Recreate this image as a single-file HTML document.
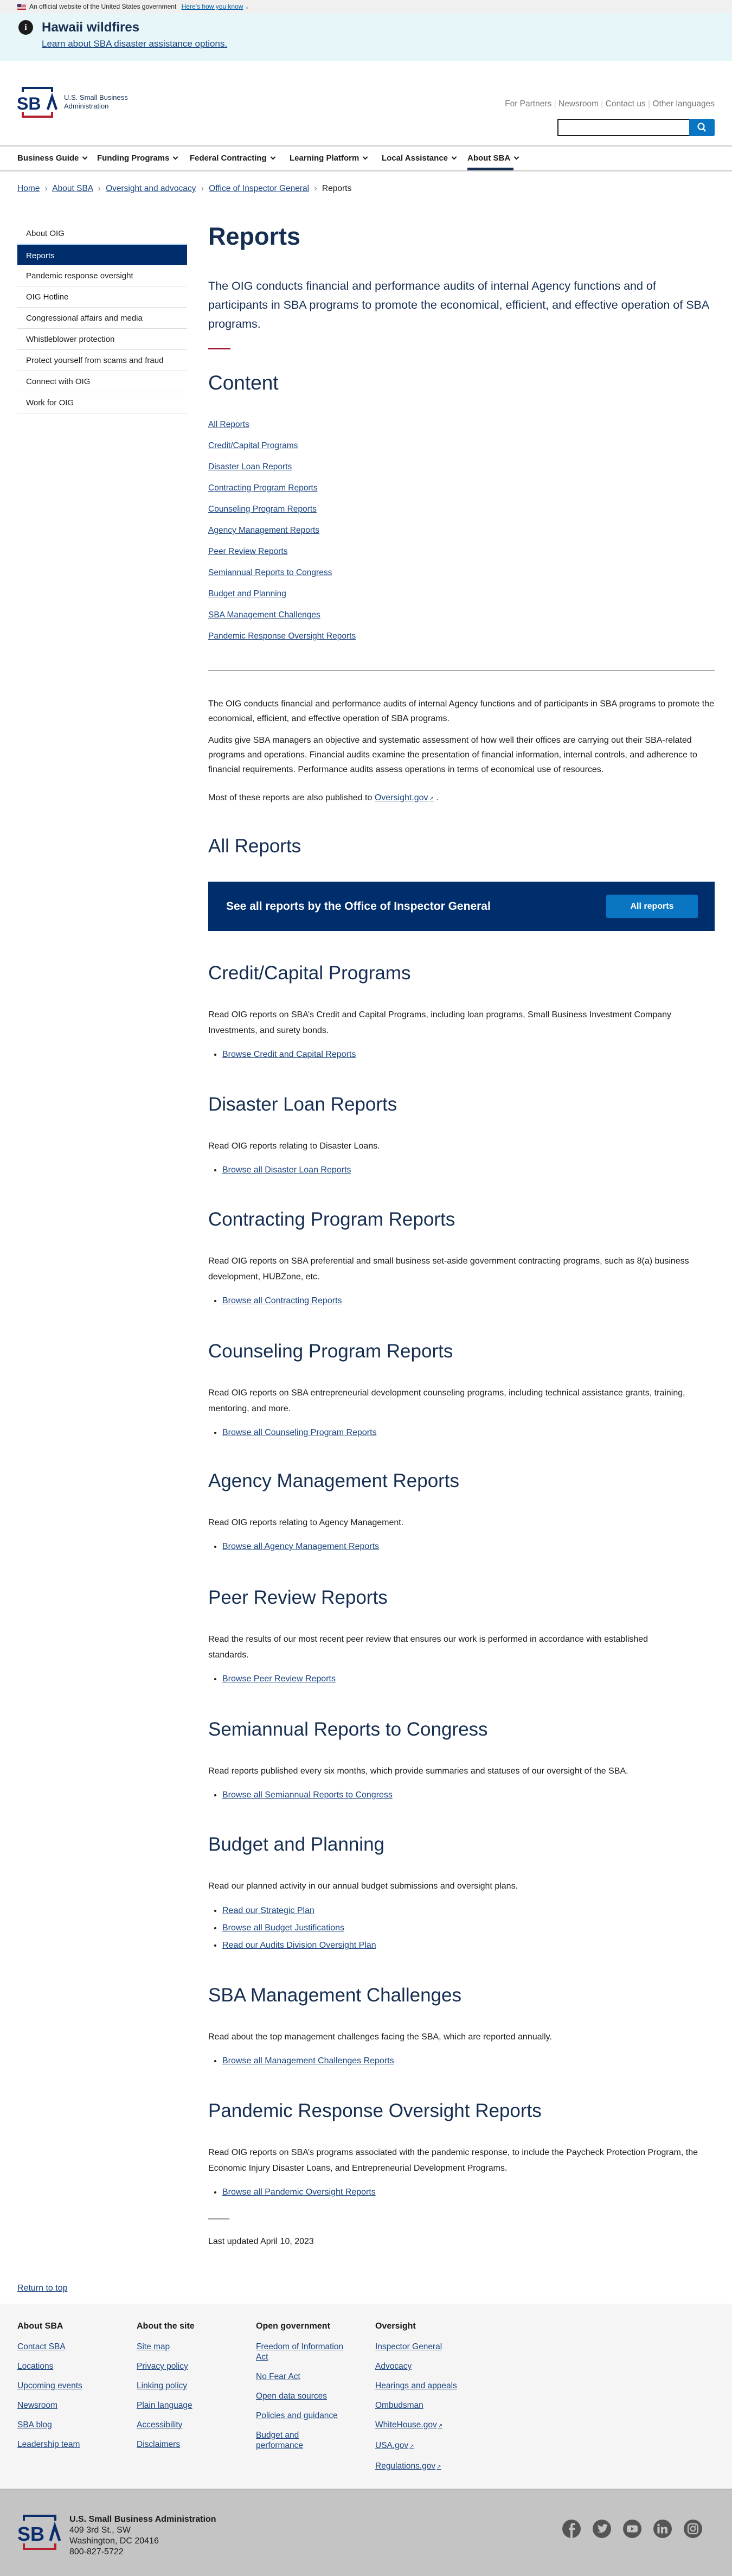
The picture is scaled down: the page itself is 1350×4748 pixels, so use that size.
<!DOCTYPE html>
<html><head><meta charset="utf-8"><title>Reports | U.S. Small Business Administration</title>
<style>
*{margin:0;padding:0;box-sizing:border-box}
html,body{width:1350px;height:4748px;background:#fff;font-family:"Liberation Sans",Arial,sans-serif;color:#1b1b1b;position:relative;overflow:hidden}
a{color:#1a4480;text-decoration:underline}
.abs{position:absolute}
.gov{left:0;top:0;width:1350px;height:24px;background:#f0f0f0;font-size:12px;line-height:24px;padding-left:54px}
.gov a{color:#005ea2;margin-left:6px}
.hawaii{left:0;top:24px;width:1350px;height:88px;background:#e7f6f8}
.nav{left:0;top:268px;width:1350px;height:48px;border-top:2px solid #c9c9c9;border-bottom:2px solid #c9c9c9}
.nav span{position:absolute;top:0;line-height:44px;font-size:15px;font-weight:bold;color:#1b1b1b;white-space:nowrap}
.nav span:after{content:"";display:inline-block;width:5px;height:5px;border-right:2px solid #1b1b1b;border-bottom:2px solid #1b1b1b;transform:rotate(45deg);margin-left:8px;position:relative;top:-3px}
.side{left:32px;top:411px;width:313px}
.side div{height:39px;line-height:39px;padding-left:16px;font-size:15px;border-bottom:1px solid #dcdee0;color:#1b1b1b;white-space:nowrap}
.side div.act{background:#002e6d;color:#fff;border-top:2px solid #a8d2f0}
.main{left:384px;width:934px}
h1{font-size:45px;font-weight:bold;color:#162e51;line-height:54px}
.intro{font-size:21.5px;line-height:35px;color:#162e51}
h2{font-size:35px;font-weight:normal;color:#162e51;line-height:44px;white-space:nowrap}
.toc a{display:block;font-size:15.5px;line-height:39px;height:39px}
p.b{font-size:16px;line-height:27px}
.sec p{font-size:16px;line-height:29px;margin-top:40px}
.sec ul{margin-top:15px;padding-left:26px;font-size:16px;line-height:29px}
.sec ul.m li{line-height:32px}
.foot{left:0;top:4246px;width:1350px;height:341px;background:#f5f5f5}
.fcol{position:absolute;top:30px;width:190px}
.fcol h4{font-size:16px;font-weight:bold;line-height:24px;margin-bottom:16px;color:#1b1b1b}
.fcol a{display:block;font-size:15.5px;line-height:19px;margin-bottom:17px;color:#1a4480}
.fbot{left:0;top:4587px;width:1350px;height:161px;background:#c4c4c4;border-top:3px solid #b9b9b9}
.ext:after{content:"↗";font-size:10px;margin-left:2px}
</style></head><body>

<div class="abs gov">
<svg class="abs" style="left:32px;top:7px" width="16" height="11" viewBox="0 0 16 11"><rect width="16" height="11" fill="#fff"/><g fill="#b22234"><rect y="0" width="16" height="1.2"/><rect y="2.4" width="16" height="1.2"/><rect y="4.8" width="16" height="1.2"/><rect y="7.2" width="16" height="1.2"/><rect y="9.6" width="16" height="1.4"/></g><rect width="7" height="6" fill="#3c3b6e"/></svg>
An official website of the United States government <a href="#">Here’s how you know</a> <span style="font-size:9px;color:#005ea2">⌄</span>
</div>

<div class="abs hawaii">
<div class="abs" style="left:34px;top:13px;width:27px;height:27px;border-radius:50%;background:#1b1b1b;color:#fff;font:bold 16px/27px 'Liberation Serif',serif;text-align:center">i</div>
<div class="abs" style="left:77px;top:12px;font-size:24px;font-weight:bold;color:#162e51;line-height:30px">Hawaii wildfires</div>
<a class="abs" style="left:77px;top:46px;font-size:17px;line-height:22px;color:#1a4480" href="#">Learn about SBA disaster assistance options.</a>
</div>

<svg class="abs" style="left:30px;top:158px" width="80" height="62" viewBox="0 0 80 62">
<path d="M12 12 V4 H66 V12" fill="none" stroke="#0b2d6b" stroke-width="4"/>
<path d="M12 48 V57 H66 V48" fill="none" stroke="#b51f2e" stroke-width="4"/>
<text x="1" y="44" font-family="Liberation Sans,sans-serif" font-weight="bold" font-size="32" fill="#0b2d6b">SB</text>
<path d="M58 44 L66 20 L74 44" fill="none" stroke="#0b2d6b" stroke-width="4.5"/>
</svg>
<div class="abs" style="left:118px;top:172px;font-size:13px;line-height:16px;color:#162e51">U.S. Small Business<br>Administration</div>

<div class="abs" style="right:32px;top:182px;font-size:15.5px;line-height:20px;color:#71767a;white-space:nowrap">For Partners <span style="color:#ccc">|</span> Newsroom <span style="color:#ccc">|</span> Contact us <span style="color:#ccc">|</span> Other languages</div>
<div class="abs" style="left:1028px;top:219px;width:244px;height:32px;border:2px solid #1b1b1b;border-right:none"></div>
<div class="abs" style="left:1271px;top:219px;width:47px;height:32px;background:#0a75c2;border-radius:0 3px 3px 0">
<svg width="47" height="32" viewBox="0 0 47 32"><circle cx="22" cy="14" r="5.5" fill="none" stroke="#fff" stroke-width="2.2"/><path d="M26 18 L30 23" stroke="#fff" stroke-width="2.5"/></svg></div>

<div class="abs nav">
<span style="left:32px">Business Guide</span>
<span style="left:179px">Funding Programs</span>
<span style="left:350px">Federal Contracting</span>
<span style="left:534px">Learning Platform</span>
<span style="left:704px">Local Assistance</span>
<span style="left:862px">About SBA</span>
<div class="abs" style="left:862px;top:39px;width:85px;height:5px;background:#162e51"></div>
</div>

<div class="abs" style="left:32px;top:337px;font-size:15.5px;line-height:22px;white-space:nowrap;color:#1b1b1b">
<a href="#">Home</a> <span style="color:#71767a;margin:0 5px">›</span> <a href="#">About SBA</a> <span style="color:#71767a;margin:0 5px">›</span> <a href="#">Oversight and advocacy</a> <span style="color:#71767a;margin:0 5px">›</span> <a href="#">Office of Inspector General</a> <span style="color:#71767a;margin:0 5px">›</span> Reports</div>

<div class="abs side">
<div>About OIG</div><div class="act">Reports</div><div>Pandemic response oversight</div><div>OIG Hotline</div><div>Congressional affairs and media</div><div>Whistleblower protection</div><div>Protect yourself from scams and fraud</div><div>Connect with OIG</div><div>Work for OIG</div>
</div>

<h1 class="abs main" style="top:409px">Reports</h1>
<div class="abs main intro" style="top:510px">The OIG conducts financial and performance audits of internal Agency functions and of participants in SBA programs to promote the economical, efficient, and effective operation of SBA programs.</div>
<div class="abs" style="left:384px;top:641px;width:41px;height:3px;background:#9e1b32"></div>
<h2 class="abs main" style="top:684px;font-size:37px">Content</h2>
<div class="abs main toc" style="top:763px">
<a href="#">All Reports</a><a href="#">Credit/Capital Programs</a><a href="#">Disaster Loan Reports</a><a href="#">Contracting Program Reports</a><a href="#">Counseling Program Reports</a><a href="#">Agency Management Reports</a><a href="#">Peer Review Reports</a><a href="#">Semiannual Reports to Congress</a><a href="#">Budget and Planning</a><a href="#">SBA Management Challenges</a><a href="#">Pandemic Response Oversight Reports</a>
</div>
<div class="abs" style="left:384px;top:1235px;width:934px;height:2px;background:#a9aeb1"></div>
<p class="abs main b" style="top:1284px">The OIG conducts financial and performance audits of internal Agency functions and of participants in SBA programs to promote the economical, efficient, and effective operation of SBA programs.</p>
<p class="abs main b" style="top:1351px">Audits give SBA managers an objective and systematic assessment of how well their offices are carrying out their SBA-related programs and operations. Financial audits examine the presentation of financial information, internal controls, and adherence to financial requirements. Performance audits assess operations in terms of economical use of resources.</p>
<p class="abs main b" style="top:1457px">Most of these reports are also published to <a class="ext" href="#">Oversight.gov</a> .</p>

<h2 class="abs main" style="top:1538px">All Reports</h2>
<div class="abs" style="left:384px;top:1625px;width:934px;height:91px;background:#002e6d">
<div class="abs" style="left:33px;top:32px;font-size:21px;font-weight:bold;color:#fff;line-height:28px">See all reports by the Office of Inspector General</div>
<div class="abs" style="left:734px;top:24px;width:169px;height:43px;background:#0a75c2;border-radius:3px;color:#fff;font-size:16px;font-weight:bold;text-align:center;line-height:43px">All reports</div>
</div>

<div class="abs main sec" style="top:1772px"><h2>Credit/Capital Programs</h2><p>Read OIG reports on SBA’s Credit and Capital Programs, including loan programs, Small Business Investment Company Investments, and surety bonds.</p><ul><li><a href="#">Browse Credit and Capital Reports</a></li></ul></div>
<div class="abs main sec" style="top:2014px"><h2>Disaster Loan Reports</h2><p>Read OIG reports relating to Disaster Loans.</p><ul><li><a href="#">Browse all Disaster Loan Reports</a></li></ul></div>
<div class="abs main sec" style="top:2226px"><h2>Contracting Program Reports</h2><p>Read OIG reports on SBA preferential and small business set-aside government contracting programs, such as 8(a) business development, HUBZone, etc.</p><ul><li><a href="#">Browse all Contracting Reports</a></li></ul></div>
<div class="abs main sec" style="top:2469px"><h2>Counseling Program Reports</h2><p>Read OIG reports on SBA entrepreneurial development counseling programs, including technical assistance grants, training, mentoring, and more.</p><ul><li><a href="#">Browse all Counseling Program Reports</a></li></ul></div>
<div class="abs main sec" style="top:2708px"><h2>Agency Management Reports</h2><p>Read OIG reports relating to Agency Management.</p><ul><li><a href="#">Browse all Agency Management Reports</a></li></ul></div>
<div class="abs main sec" style="top:2923px"><h2>Peer Review Reports</h2><p style="max-width:850px">Read the results of our most recent peer review that ensures our work is performed in accordance with established standards.</p><ul><li><a href="#">Browse Peer Review Reports</a></li></ul></div>
<div class="abs main sec" style="top:3166px"><h2>Semiannual Reports to Congress</h2><p>Read reports published every six months, which provide summaries and statuses of our oversight of the SBA.</p><ul><li><a href="#">Browse all Semiannual Reports to Congress</a></li></ul></div>
<div class="abs main sec" style="top:3378px"><h2>Budget and Planning</h2><p>Read our planned activity in our annual budget submissions and oversight plans.</p><ul class="m"><li><a href="#">Read our Strategic Plan</a></li><li><a href="#">Browse all Budget Justifications</a></li><li><a href="#">Read our Audits Division Oversight Plan</a></li></ul></div>
<div class="abs main sec" style="top:3656px"><h2>SBA Management Challenges</h2><p>Read about the top management challenges facing the SBA, which are reported annually.</p><ul><li><a href="#">Browse all Management Challenges Reports</a></li></ul></div>
<div class="abs main sec" style="top:3869px"><h2>Pandemic Response Oversight Reports</h2><p>Read OIG reports on SBA’s programs associated with the pandemic response, to include the Paycheck Protection Program, the Economic Injury Disaster Loans, and Entrepreneurial Development Programs.</p><ul><li><a href="#">Browse all Pandemic Oversight Reports</a></li></ul></div>

<div class="abs" style="left:384px;top:4088px;width:39px;height:3px;background:#a9aeb1"></div>
<div class="abs" style="left:384px;top:4121px;font-size:16px;line-height:22px">Last updated April 10, 2023</div>
<a class="abs" style="left:32px;top:4207px;font-size:16px;line-height:22px" href="#">Return to top</a>

<div class="abs foot">
<div class="fcol" style="left:32px"><h4>About SBA</h4><a href="#">Contact SBA</a><a href="#">Locations</a><a href="#">Upcoming events</a><a href="#">Newsroom</a><a href="#">SBA blog</a><a href="#">Leadership team</a></div>
<div class="fcol" style="left:252px"><h4>About the site</h4><a href="#">Site map</a><a href="#">Privacy policy</a><a href="#">Linking policy</a><a href="#">Plain language</a><a href="#">Accessibility</a><a href="#">Disclaimers</a></div>
<div class="fcol" style="left:472px;width:182px"><h4>Open government</h4><a href="#">Freedom of Information Act</a><a href="#">No Fear Act</a><a href="#">Open data sources</a><a href="#">Policies and guidance</a><a href="#" style="width:110px">Budget and performance</a></div>
<div class="fcol" style="left:692px"><h4>Oversight</h4><a href="#">Inspector General</a><a href="#">Advocacy</a><a href="#">Hearings and appeals</a><a href="#">Ombudsman</a><a class="ext" href="#">WhiteHouse.gov</a><a class="ext" href="#">USA.gov</a><a class="ext" href="#">Regulations.gov</a></div>
</div>

<div class="abs fbot">
<svg class="abs" style="left:30px;top:42px" width="84" height="72" viewBox="0 0 84 72">
<path d="M14 14 V5 H72 V14" fill="none" stroke="#0b2d6b" stroke-width="4"/>
<path d="M14 56 V66 H72 V56" fill="none" stroke="#b51f2e" stroke-width="4"/>
<text x="2" y="51" font-family="Liberation Sans,sans-serif" font-weight="bold" font-size="36" fill="#0b2d6b">SB</text>
<path d="M63 51 L71 24 L80 51" fill="none" stroke="#0b2d6b" stroke-width="5"/>
</svg>
<div class="abs" style="left:128px;top:44px;font-size:16px;line-height:20px;color:#1b1b1b"><b>U.S. Small Business Administration</b><br>409 3rd St., SW<br>Washington, DC 20416<br>800-827-5722</div>
<svg class="abs" style="left:1037px;top:54px" width="260" height="36" viewBox="0 0 260 36">
<g fill="#555">
<circle cx="17" cy="17" r="17"/><circle cx="73" cy="17" r="17"/><circle cx="129" cy="17" r="17"/><circle cx="185" cy="17" r="17"/><circle cx="241" cy="17" r="17"/>
</g>
<path d="M19 34 V19 H23 V15 H19 V12 Q19 10 21 10 H23.5 V6.5 H20 Q15 6.5 15 11.5 V15 H12 V19 H15 V34 Z" fill="#c4c4c4"/>
<path d="M64 22 Q68 25 73 24 Q81 22 82 12 L84 10 L82 10.5 L83 8.5 L81 9.5 Q78 7 75.5 9.5 Q74 11 74.7 13 Q69 13 66 9.5 Q64.5 12.5 67.5 15 L65.8 14.5 Q66 17.5 69 18.5 L67.5 18.7 Q68.5 21 71 21.5 Q68 23.5 64 22 Z" fill="#c4c4c4"/>
<rect x="119" y="10.5" width="20" height="13" rx="3.5" fill="#c4c4c4"/><path d="M127 14 L127 20 L132 17 Z" fill="#555"/>
<circle cx="177.5" cy="10" r="2.2" fill="#c4c4c4"/><rect x="175.5" y="13.5" width="4" height="12" fill="#c4c4c4"/><path d="M182 25.5 V13.5 H185.8 V15.3 Q187.5 13 190.5 13.2 Q194 13.5 194 18 V25.5 H190 V18.8 Q190 16.5 188 16.5 Q186 16.5 186 18.8 V25.5 Z" fill="#c4c4c4"/>
<rect x="232" y="8" width="18" height="18" rx="5" fill="none" stroke="#c4c4c4" stroke-width="2.2"/><circle cx="241" cy="17" r="4.2" fill="none" stroke="#c4c4c4" stroke-width="2.2"/><circle cx="246" cy="12" r="1.2" fill="#c4c4c4"/>
</svg>
</div>
</body></html>
